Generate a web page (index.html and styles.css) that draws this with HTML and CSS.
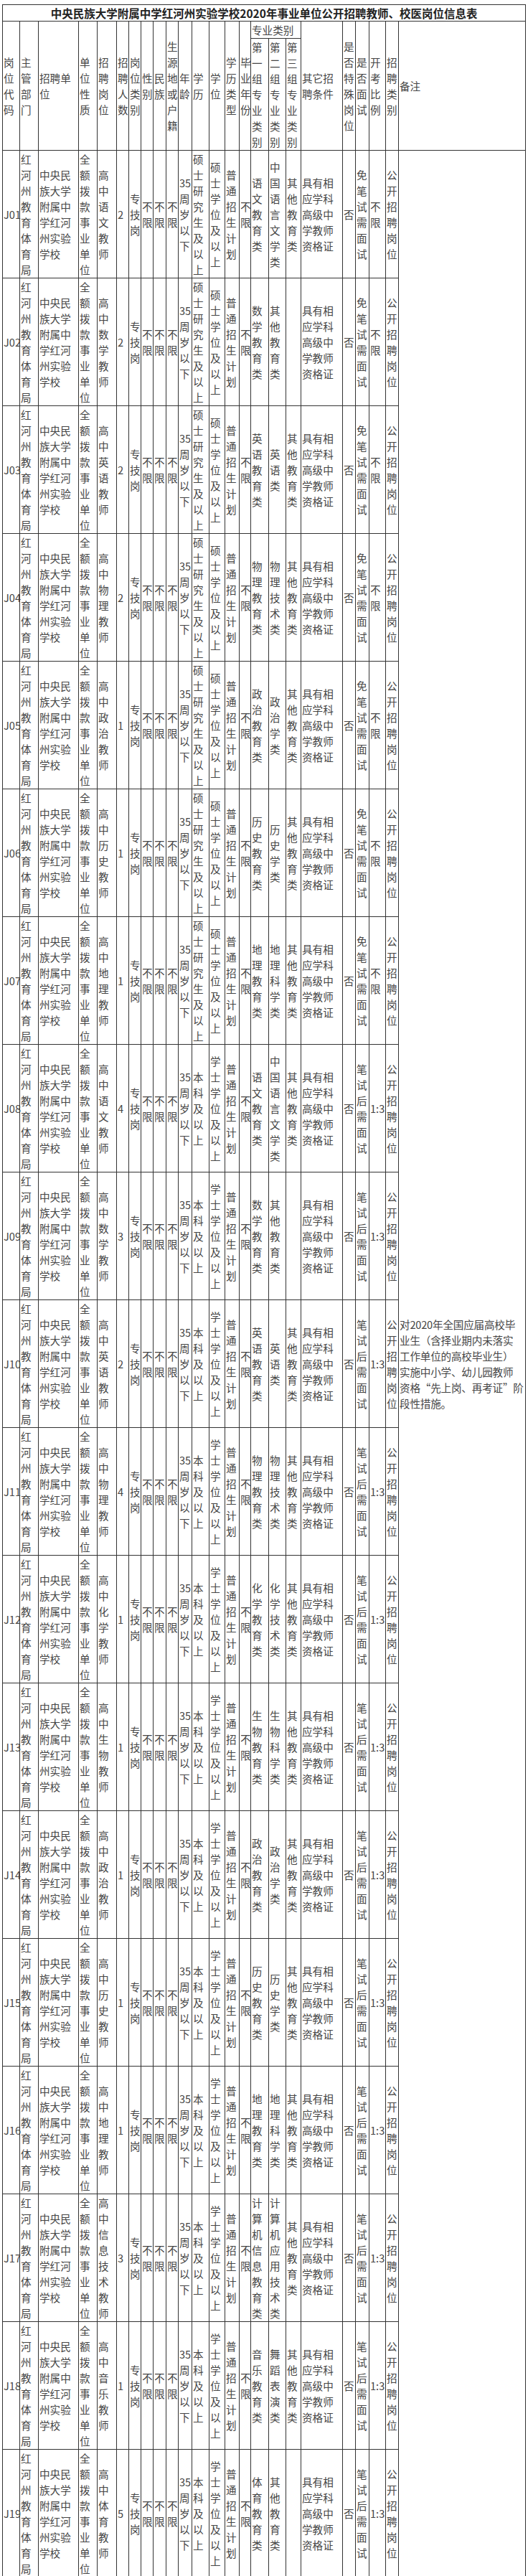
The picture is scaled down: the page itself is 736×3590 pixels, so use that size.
FILE: index.html
```html
<!DOCTYPE html>
<html lang="zh-CN">
<head>
<meta charset="utf-8">
<title>岗位信息表</title>
<link rel="stylesheet" href="styles.css">
</head>
<body>
<table class="sheet">
<colgroup>
<col class="w24"><col class="w26"><col class="w56"><col class="w26"><col class="w27"><col class="w17"><col class="w17"><col class="w17"><col class="w18"><col class="w17"><col class="w19"><col class="w24"><col class="w22"><col class="w20"><col class="w16"><col class="w25"><col class="w24"><col class="w21"><col class="w58"><col class="w18"><col class="w19"><col class="w23"><col class="w18"><col class="w177">
</colgroup>
<tr class="title"><td colspan="24">中央民族大学附属中学红河州实验学校2020年事业单位公开招聘教师、校医岗位信息表</td></tr>
<tr class="head-top">
<td rowspan="2">岗位代码</td>
<td rowspan="2">主管部门</td>
<td rowspan="2">招聘单位</td>
<td rowspan="2">单位性质</td>
<td rowspan="2">招聘岗位</td>
<td rowspan="2">招聘人数</td>
<td rowspan="2">岗位类别</td>
<td rowspan="2">性别</td>
<td rowspan="2">民族</td>
<td rowspan="2">生源地或户籍</td>
<td rowspan="2">年龄</td>
<td rowspan="2">学历</td>
<td rowspan="2">学位</td>
<td rowspan="2">学历类型</td>
<td rowspan="2">毕业年份</td>
<td colspan="3">专业类别</td>
<td rowspan="2">其它招聘条件</td>
<td rowspan="2">是否特殊岗位</td>
<td rowspan="2">是否面试</td>
<td rowspan="2">开考比例</td>
<td rowspan="2">招聘类别</td>
<td rowspan="2">备注</td>
</tr>
<tr class="head-sub"><td>第一组专业类别</td><td>第二组专业类别</td><td>第三组专业类别</td></tr>

<tr class="job"><td>J01</td><td>红河州教育体育局</td><td>中央民族大学附属中学红河州实验学校</td><td>全额拨款事业单位</td><td>高中语文教师</td><td>2</td><td>专技岗</td><td>不限</td><td>不限</td><td>不限</td><td>35周岁以下</td><td>硕士研究生及以上</td><td>硕士学位及以上</td><td>普通招生计划</td><td>不限</td><td>语文教育类</td><td>中国语言文学类</td><td>其他教育类</td><td>具有相应学科高级中学教师资格证</td><td>否</td><td>免笔试需面试</td><td>不限</td><td>公开招聘岗位</td><td rowspan="19" class="note">对2020年全国应届高校毕<br>业生（含择业期内未落实<br>工作单位的高校毕业生）<br>实施中小学、幼儿园教师<br>资格“先上岗、再考证”阶<br>段性措施。</td></tr>
<tr class="job"><td>J02</td><td>红河州教育体育局</td><td>中央民族大学附属中学红河州实验学校</td><td>全额拨款事业单位</td><td>高中数学教师</td><td>2</td><td>专技岗</td><td>不限</td><td>不限</td><td>不限</td><td>35周岁以下</td><td>硕士研究生及以上</td><td>硕士学位及以上</td><td>普通招生计划</td><td>不限</td><td>数学教育类</td><td>其他教育类</td><td></td><td>具有相应学科高级中学教师资格证</td><td>否</td><td>免笔试需面试</td><td>不限</td><td>公开招聘岗位</td></tr>
<tr class="job"><td>J03</td><td>红河州教育体育局</td><td>中央民族大学附属中学红河州实验学校</td><td>全额拨款事业单位</td><td>高中英语教师</td><td>2</td><td>专技岗</td><td>不限</td><td>不限</td><td>不限</td><td>35周岁以下</td><td>硕士研究生及以上</td><td>硕士学位及以上</td><td>普通招生计划</td><td>不限</td><td>英语教育类</td><td>英语类</td><td>其他教育类</td><td>具有相应学科高级中学教师资格证</td><td>否</td><td>免笔试需面试</td><td>不限</td><td>公开招聘岗位</td></tr>
<tr class="job"><td>J04</td><td>红河州教育体育局</td><td>中央民族大学附属中学红河州实验学校</td><td>全额拨款事业单位</td><td>高中物理教师</td><td>2</td><td>专技岗</td><td>不限</td><td>不限</td><td>不限</td><td>35周岁以下</td><td>硕士研究生及以上</td><td>硕士学位及以上</td><td>普通招生计划</td><td>不限</td><td>物理教育类</td><td>物理技术类</td><td>其他教育类</td><td>具有相应学科高级中学教师资格证</td><td>否</td><td>免笔试需面试</td><td>不限</td><td>公开招聘岗位</td></tr>
<tr class="job"><td>J05</td><td>红河州教育体育局</td><td>中央民族大学附属中学红河州实验学校</td><td>全额拨款事业单位</td><td>高中政治教师</td><td>1</td><td>专技岗</td><td>不限</td><td>不限</td><td>不限</td><td>35周岁以下</td><td>硕士研究生及以上</td><td>硕士学位及以上</td><td>普通招生计划</td><td>不限</td><td>政治教育类</td><td>政治学类</td><td>其他教育类</td><td>具有相应学科高级中学教师资格证</td><td>否</td><td>免笔试需面试</td><td>不限</td><td>公开招聘岗位</td></tr>
<tr class="job"><td>J06</td><td>红河州教育体育局</td><td>中央民族大学附属中学红河州实验学校</td><td>全额拨款事业单位</td><td>高中历史教师</td><td>1</td><td>专技岗</td><td>不限</td><td>不限</td><td>不限</td><td>35周岁以下</td><td>硕士研究生及以上</td><td>硕士学位及以上</td><td>普通招生计划</td><td>不限</td><td>历史教育类</td><td>历史学类</td><td>其他教育类</td><td>具有相应学科高级中学教师资格证</td><td>否</td><td>免笔试需面试</td><td>不限</td><td>公开招聘岗位</td></tr>
<tr class="job"><td>J07</td><td>红河州教育体育局</td><td>中央民族大学附属中学红河州实验学校</td><td>全额拨款事业单位</td><td>高中地理教师</td><td>1</td><td>专技岗</td><td>不限</td><td>不限</td><td>不限</td><td>35周岁以下</td><td>硕士研究生及以上</td><td>硕士学位及以上</td><td>普通招生计划</td><td>不限</td><td>地理教育类</td><td>地理科学类</td><td>其他教育类</td><td>具有相应学科高级中学教师资格证</td><td>否</td><td>免笔试需面试</td><td>不限</td><td>公开招聘岗位</td></tr>
<tr class="job"><td>J08</td><td>红河州教育体育局</td><td>中央民族大学附属中学红河州实验学校</td><td>全额拨款事业单位</td><td>高中语文教师</td><td>4</td><td>专技岗</td><td>不限</td><td>不限</td><td>不限</td><td>35周岁以下</td><td>本科及以上</td><td>学士学位及以上</td><td>普通招生计划</td><td>不限</td><td>语文教育类</td><td>中国语言文学类</td><td>其他教育类</td><td>具有相应学科高级中学教师资格证</td><td>否</td><td>笔试后需面试</td><td>1:3</td><td>公开招聘岗位</td></tr>
<tr class="job"><td>J09</td><td>红河州教育体育局</td><td>中央民族大学附属中学红河州实验学校</td><td>全额拨款事业单位</td><td>高中数学教师</td><td>3</td><td>专技岗</td><td>不限</td><td>不限</td><td>不限</td><td>35周岁以下</td><td>本科及以上</td><td>学士学位及以上</td><td>普通招生计划</td><td>不限</td><td>数学教育类</td><td>其他教育类</td><td></td><td>具有相应学科高级中学教师资格证</td><td>否</td><td>笔试后需面试</td><td>1:3</td><td>公开招聘岗位</td></tr>
<tr class="job"><td>J10</td><td>红河州教育体育局</td><td>中央民族大学附属中学红河州实验学校</td><td>全额拨款事业单位</td><td>高中英语教师</td><td>2</td><td>专技岗</td><td>不限</td><td>不限</td><td>不限</td><td>35周岁以下</td><td>本科及以上</td><td>学士学位及以上</td><td>普通招生计划</td><td>不限</td><td>英语教育类</td><td>英语类</td><td>其他教育类</td><td>具有相应学科高级中学教师资格证</td><td>否</td><td>笔试后需面试</td><td>1:3</td><td>公开招聘岗位</td></tr>
<tr class="job"><td>J11</td><td>红河州教育体育局</td><td>中央民族大学附属中学红河州实验学校</td><td>全额拨款事业单位</td><td>高中物理教师</td><td>4</td><td>专技岗</td><td>不限</td><td>不限</td><td>不限</td><td>35周岁以下</td><td>本科及以上</td><td>学士学位及以上</td><td>普通招生计划</td><td>不限</td><td>物理教育类</td><td>物理技术类</td><td>其他教育类</td><td>具有相应学科高级中学教师资格证</td><td>否</td><td>笔试后需面试</td><td>1:3</td><td>公开招聘岗位</td></tr>
<tr class="job"><td>J12</td><td>红河州教育体育局</td><td>中央民族大学附属中学红河州实验学校</td><td>全额拨款事业单位</td><td>高中化学教师</td><td>1</td><td>专技岗</td><td>不限</td><td>不限</td><td>不限</td><td>35周岁以下</td><td>本科及以上</td><td>学士学位及以上</td><td>普通招生计划</td><td>不限</td><td>化学教育类</td><td>化学技术类</td><td>其他教育类</td><td>具有相应学科高级中学教师资格证</td><td>否</td><td>笔试后需面试</td><td>1:3</td><td>公开招聘岗位</td></tr>
<tr class="job"><td>J13</td><td>红河州教育体育局</td><td>中央民族大学附属中学红河州实验学校</td><td>全额拨款事业单位</td><td>高中生物教师</td><td>1</td><td>专技岗</td><td>不限</td><td>不限</td><td>不限</td><td>35周岁以下</td><td>本科及以上</td><td>学士学位及以上</td><td>普通招生计划</td><td>不限</td><td>生物教育类</td><td>生物科学类</td><td>其他教育类</td><td>具有相应学科高级中学教师资格证</td><td>否</td><td>笔试后需面试</td><td>1:3</td><td>公开招聘岗位</td></tr>
<tr class="job"><td>J14</td><td>红河州教育体育局</td><td>中央民族大学附属中学红河州实验学校</td><td>全额拨款事业单位</td><td>高中政治教师</td><td>1</td><td>专技岗</td><td>不限</td><td>不限</td><td>不限</td><td>35周岁以下</td><td>本科及以上</td><td>学士学位及以上</td><td>普通招生计划</td><td>不限</td><td>政治教育类</td><td>政治学类</td><td>其他教育类</td><td>具有相应学科高级中学教师资格证</td><td>否</td><td>笔试后需面试</td><td>1:3</td><td>公开招聘岗位</td></tr>
<tr class="job"><td>J15</td><td>红河州教育体育局</td><td>中央民族大学附属中学红河州实验学校</td><td>全额拨款事业单位</td><td>高中历史教师</td><td>1</td><td>专技岗</td><td>不限</td><td>不限</td><td>不限</td><td>35周岁以下</td><td>本科及以上</td><td>学士学位及以上</td><td>普通招生计划</td><td>不限</td><td>历史教育类</td><td>历史学类</td><td>其他教育类</td><td>具有相应学科高级中学教师资格证</td><td>否</td><td>笔试后需面试</td><td>1:3</td><td>公开招聘岗位</td></tr>
<tr class="job"><td>J16</td><td>红河州教育体育局</td><td>中央民族大学附属中学红河州实验学校</td><td>全额拨款事业单位</td><td>高中地理教师</td><td>1</td><td>专技岗</td><td>不限</td><td>不限</td><td>不限</td><td>35周岁以下</td><td>本科及以上</td><td>学士学位及以上</td><td>普通招生计划</td><td>不限</td><td>地理教育类</td><td>地理科学类</td><td>其他教育类</td><td>具有相应学科高级中学教师资格证</td><td>否</td><td>笔试后需面试</td><td>1:3</td><td>公开招聘岗位</td></tr>
<tr class="job"><td>J17</td><td>红河州教育体育局</td><td>中央民族大学附属中学红河州实验学校</td><td>全额拨款事业单位</td><td>高中信息技术教师</td><td>3</td><td>专技岗</td><td>不限</td><td>不限</td><td>不限</td><td>35周岁以下</td><td>本科及以上</td><td>学士学位及以上</td><td>普通招生计划</td><td>不限</td><td>计算机信息教育类</td><td>计算机应用技术类</td><td>其他教育类</td><td>具有相应学科高级中学教师资格证</td><td>否</td><td>笔试后需面试</td><td>1:3</td><td>公开招聘岗位</td></tr>
<tr class="job"><td>J18</td><td>红河州教育体育局</td><td>中央民族大学附属中学红河州实验学校</td><td>全额拨款事业单位</td><td>高中音乐教师</td><td>1</td><td>专技岗</td><td>不限</td><td>不限</td><td>不限</td><td>35周岁以下</td><td>本科及以上</td><td>学士学位及以上</td><td>普通招生计划</td><td>不限</td><td>音乐教育类</td><td>舞蹈表演类</td><td>其他教育类</td><td>具有相应学科高级中学教师资格证</td><td>否</td><td>笔试后需面试</td><td>1:3</td><td>公开招聘岗位</td></tr>
<tr class="job"><td>J19</td><td>红河州教育体育局</td><td>中央民族大学附属中学红河州实验学校</td><td>全额拨款事业单位</td><td>高中体育教师</td><td>5</td><td>专技岗</td><td>不限</td><td>不限</td><td>不限</td><td>35周岁以下</td><td>本科及以上</td><td>学士学位及以上</td><td>普通招生计划</td><td>不限</td><td>体育教育类</td><td>其他教育类</td><td></td><td>具有相应学科高级中学教师资格证</td><td>否</td><td>笔试后需面试</td><td>1:3</td><td>公开招聘岗位</td></tr>
</table>
</body>
</html>
```

FILE: styles.css
```css
html, body {
  margin: 0;
  background: #ffffff;
}
body {
  padding: 6px 0 0 3px;
  font-family: "Noto Sans CJK SC", "Noto Sans", sans-serif;
}
.sheet {
  border-collapse: collapse;
  table-layout: fixed;
  width: 729px;
  font-size: 14.6px;
  line-height: 22px;
  color: #454545;
}
.sheet td {
  border: 1px solid #333333;
  padding: 0 1px;
  vertical-align: middle;
  text-align: left;
}
.sheet .title td {
  height: 22px;
  text-align: center;
  font-weight: bold;
  font-size: 15.5px;
  color: #222222;
}
.sheet .head-top td { height: 23px; }
.sheet .head-sub td { height: 155px; }
.sheet .job td { height: 177px; }
.sheet td.note {
  vertical-align: middle;
  white-space: nowrap;
  overflow: hidden;
  letter-spacing: -0.2px;
}

.w16 { width: 16px; }
.w17 { width: 17px; }
.w18 { width: 18px; }
.w19 { width: 19px; }
.w20 { width: 20px; }
.w21 { width: 21px; }
.w22 { width: 22px; }
.w23 { width: 23px; }
.w24 { width: 24px; }
.w25 { width: 25px; }
.w26 { width: 26px; }
.w27 { width: 27px; }
.w56 { width: 56px; }
.w58 { width: 58px; }
.w177 { width: 177px; }
```
